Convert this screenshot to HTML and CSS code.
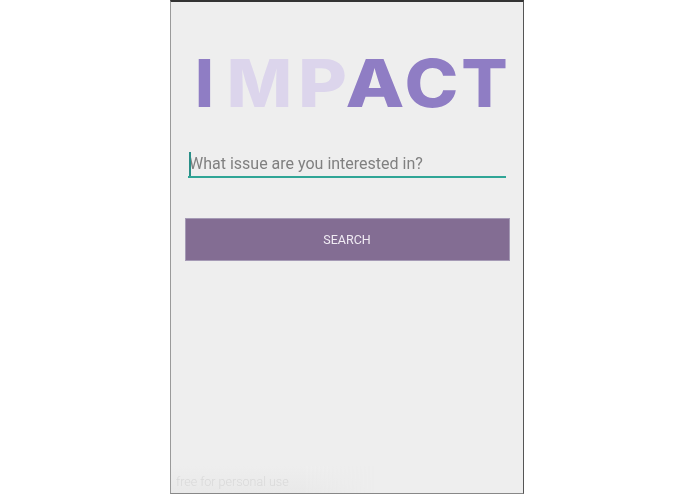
FILE: index.html
```html
<!DOCTYPE html>
<html lang="en">
<head>
<meta charset="utf-8">
<title>Impact</title>
<link rel="stylesheet" href="styles.css">
</head>
<body>
<main class="phone">
  <h1 class="logo"><span class="letter l-i">I</span><span class="letter l-m">M</span><span class="letter l-p">P</span><span class="letter l-a">A</span><span class="letter l-c">C</span><span class="letter l-t">T</span></h1>
  <div class="field"><span class="caret"></span><span class="hint">What issue are you interested in?</span></div>
  <button class="search" type="button">SEARCH</button>
  <footer class="watermark">free for personal use</footer>
</main>
</body>
</html>
```
FILE: styles.css
```css
html, body { margin: 0; height: 100%; background: #fff; }
body { display: flex; justify-content: center; overflow: hidden; }
.phone {
  position: relative;
  box-sizing: border-box;
  width: 354px;
  height: 494px;
  margin-left: -1px;
  padding: 46px 13px 0 13px;
  background: #eeeeee;
  border-left: 1px solid #9a9a9a;
  border-right: 1px solid #555;
  border-top: 2px solid #333;
  border-bottom: 1px solid #888;
  font-family: Roboto, "Liberation Sans", sans-serif;
  filter: blur(0.35px);
}
.logo {
  margin: 0 0 0 14px;
  height: 70px;
  font: 800 66px/70px Inter, "Liberation Sans", sans-serif;
  color: #8f7dc4;
  white-space: nowrap;
  display: flex;
}
.letter { display: flex; justify-content: center; flex: none; }
.l-i { width: 13px; margin-right: 18px; }
.l-m { width: 61px; margin-right: 10px; color: #dcd5ec; transform: scaleX(1.05); }
.l-p { width: 45px; margin-right: 2px; color: #dcd5ec; transform: scaleX(1.14); }
.l-a { width: 56px; margin-right: 2px; transform: scaleX(1.16); }
.l-c { width: 53px; margin-right: 4px; transform: scaleX(1.1); }
.l-t { width: 45px; transform: scaleX(1.04); }
.field {
  margin: 30px 4px 0 4px;
  height: 28px;
  display: flex;
  align-items: center;
  border-bottom: 2px solid #2fa596;
  position: relative;
}
.caret { position: absolute; left: 1px; top: 4px; width: 1.5px; height: 24px; background: #2a8f88; }
.hint { font-size: 16px; color: #808080; line-height: 24px; margin: 4px 0 0 1px; }
.search {
  display: block;
  width: 325px;
  height: 43px;
  margin: 40px 0 0 0.5px;
  border: 1px solid #a59ab5;
  background: #836d93;
  color: #f0ebf3;
  font: 400 12.5px Roboto, "Liberation Sans", sans-serif;
}
.watermark {
  position: absolute;
  left: 0;
  bottom: 0;
  width: 200px;
  padding: 8px 0 3px 5px;
  font: 300 12.5px/16px Roboto, sans-serif;
  color: #d9d9d9;
  background: linear-gradient(to top, #e9e9e9, #eeeeee);
  mask-image: linear-gradient(to right, #000 65%, transparent);
}
```
